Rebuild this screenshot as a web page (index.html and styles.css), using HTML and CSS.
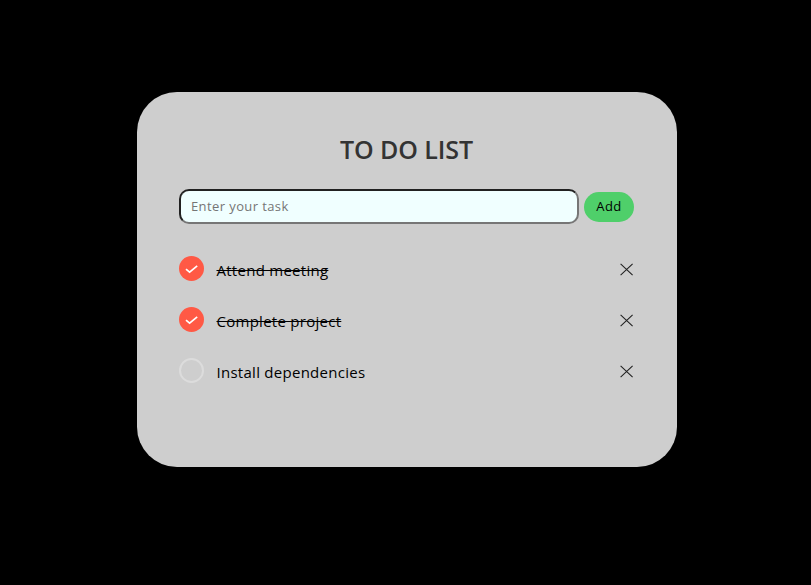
FILE: index.html
```html
<!DOCTYPE html>
<html lang="en">
<head>
<meta charset="utf-8">
<title>To Do List</title>
<link rel="stylesheet" href="styles.css">
</head>
<body>
<main class="card">
  <h1 class="title">TO DO LIST</h1>
  <form class="entry">
    <input class="field" type="text" placeholder="Enter your task">
    <button class="add" type="button">Add</button>
  </form>
  <ul class="tasks">
    <li class="task done">
      <span class="check"><svg viewBox="0 0 25 25"><path d="M7 13.1l3.6 3 7.6-6.2"/></svg></span>
      <span class="label">Attend meeting</span>
      <svg class="remove" viewBox="0 0 14 13"><path d="M.6 .8l12 11.4M12.6 .8L.6 12.2"/></svg>
    </li>
    <li class="task done">
      <span class="check"><svg viewBox="0 0 25 25"><path d="M7 13.1l3.6 3 7.6-6.2"/></svg></span>
      <span class="label">Complete project</span>
      <svg class="remove" viewBox="0 0 14 13"><path d="M.6 .8l12 11.4M12.6 .8L.6 12.2"/></svg>
    </li>
    <li class="task">
      <span class="check"></span>
      <span class="label">Install dependencies</span>
      <svg class="remove" viewBox="0 0 14 13"><path d="M.6 .8l12 11.4M12.6 .8L.6 12.2"/></svg>
    </li>
  </ul>
</main>
</body>
</html>
```
FILE: styles.css
```css
* { box-sizing: border-box; }
body {
  margin: 0;
  height: 585px;
  padding: 92px 0 0 137px;
  background: #000;
  font-family: "Lucida Sans", "Open Sans", sans-serif;
}
.card {
  width: 540px;
  height: 375px;
  padding: 39px 43px 0 42px;
  border-radius: 40px;
  background: #cecece;
}
.title {
  margin: 0 0 22px;
  height: 36px;
  line-height: 36px;
  font-size: 25px;
  font-weight: 600;
  color: #333;
  text-align: center;
  letter-spacing: -0.1px;
}
.entry { display: flex; align-items: center; gap: 5px; height: 35px; }
.field {
  width: 400px;
  height: 35px;
  padding: 0 10px 1px;
  border: 2px inset #767676;
  border-radius: 10px;
  background: azure;
  font: 13px "Lucida Sans", "Open Sans", sans-serif;
  letter-spacing: 0.4px;
}
.field::placeholder { color: #757575; }
.add {
  width: 50px;
  height: 30px;
  padding: 0 0 2px;
  border: 0;
  border-radius: 15px;
  background: #4fcf6a;
  color: #000;
  font: 13px "Lucida Sans", "Open Sans", sans-serif;
  letter-spacing: 0.5px;
}
.tasks { margin: 32px 0 0; padding: 0; list-style: none; }
.task { display: flex; align-items: flex-start; height: 51px; }
.check {
  width: 25px;
  height: 25px;
  margin-right: 12.5px;
  border: 2px solid #dcdcdc;
  border-radius: 50%;
}
.done .check { border: 0; background: #ff5945; }
.check svg { display: block; width: 25px; height: 25px; }
.check path { fill: none; stroke: #fff; stroke-width: 1.7; }
.label { flex: 1; font-size: 15px; line-height: 29px; color: #000; letter-spacing: 0.27px; }
.done .label { text-decoration: line-through; }
.remove { width: 14px; height: 13px; margin-top: 7px; }
.remove path { fill: none; stroke: #222; stroke-width: 1.1; }
```
